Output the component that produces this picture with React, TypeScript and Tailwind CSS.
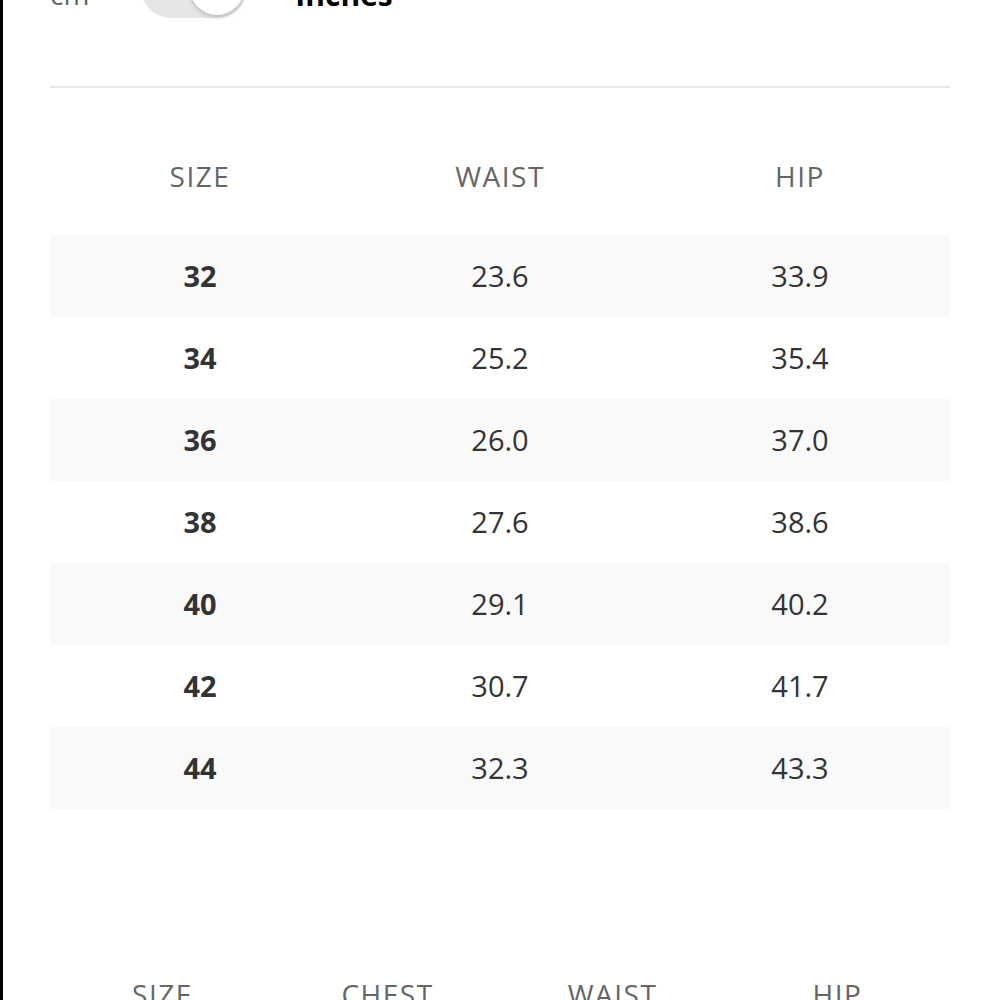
const rows = [
  ["32", "23.6", "33.9"],
  ["34", "25.2", "35.4"],
  ["36", "26.0", "37.0"],
  ["38", "27.6", "38.6"],
  ["40", "29.1", "40.2"],
  ["42", "30.7", "41.7"],
  ["44", "32.3", "43.3"],
];

export default function App() {
  return (
    <div
      className="h-[1000px] overflow-hidden bg-white border-l-[3px] border-black"
      style={{ fontFamily: '"Open Sans", "Noto Sans", sans-serif' }}
    >
      <div className="pl-[47px] pr-[50px]">
        {/* unit toggle, scrolled mostly out of view */}
        <div className="-mt-[42px] h-[60px] flex items-center">
          <span className="mt-[11px] text-[28px] text-[#666]">cm</span>
          <div className="ml-[52px] w-[106px] h-[60px] rounded-full bg-[#e6e6e6] flex items-center justify-end pr-[3px]">
            <div className="w-[54px] h-[54px] rounded-full bg-white shadow-[0_2px_4px_rgba(0,0,0,0.2)]" />
          </div>
          <span className="ml-[48px] mt-[12px] text-[30px] font-bold text-black">Inches</span>
        </div>

        <div className="mt-[68px] border-t-2 border-[#e8e8e8]" />

        <div className="mt-[47px] h-[82px] grid grid-cols-3 items-center text-center text-[28px] tracking-[1.5px] text-[#666]">
          <div>SIZE</div>
          <div>WAIST</div>
          <div>HIP</div>
        </div>

        <div className="mt-[18px]">
          {rows.map((r, i) => (
            <div
              key={r[0]}
              className={`h-[82px] grid grid-cols-3 items-center text-center text-[29px] text-[#333] ${
                i % 2 === 0 ? "bg-[#f9f9f9]" : "bg-white"
              }`}
            >
              <div className="font-bold">{r[0]}</div>
              <div>{r[1]}</div>
              <div>{r[2]}</div>
            </div>
          ))}
        </div>

        <div className="mt-[144px] h-[82px] grid grid-cols-4 items-center text-center text-[28px] tracking-[1.5px] text-[#666]">
          <div>SIZE</div>
          <div>CHEST</div>
          <div>WAIST</div>
          <div>HIP</div>
        </div>
      </div>
    </div>
  );
}
